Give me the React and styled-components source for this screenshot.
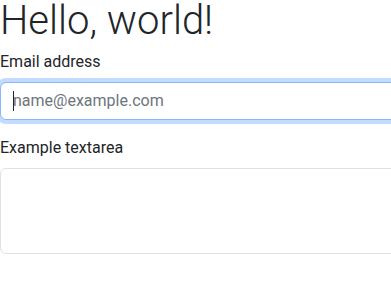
import React from "react";
import styled, { createGlobalStyle } from "styled-components";

const GlobalStyle = createGlobalStyle`
  html, body {
    margin: 0;
    overflow: hidden;
    background: #fff;
  }
  body {
    font-family: Roboto, "Noto Sans", sans-serif;
    font-size: 16px;
    line-height: 1.5;
    color: #212529;
  }
  * {
    box-sizing: border-box;
  }
`;

const Page = styled.main`
  width: 440px;
`;

const Title = styled.h1`
  margin: 0 0 8px;
  font-size: 40px;
  font-weight: 300;
  line-height: 42px;
`;

const Group = styled.div`
  margin-bottom: 16px;
`;

const Label = styled.label`
  display: block;
  margin-bottom: 8px;
`;

const Field = styled.div`
  position: relative;
`;

const Input = styled.input`
  display: block;
  width: 100%;
  padding: 6px 12px;
  font: inherit;
  line-height: 24px;
  color: #212529;
  background: #fff;
  border: 1px solid ${({ $focused }) => ($focused ? "#86b7fe" : "#dee2e6")};
  border-radius: 6px;
  outline: none;
  box-shadow: ${({ $focused }) =>
    $focused ? "0 0 0 4px rgba(13, 110, 253, 0.25)" : "none"};

  &::placeholder {
    color: #6c757d;
  }
`;

const TextArea = styled.textarea`
  display: block;
  width: 100%;
  height: 86px;
  padding: 6px 12px;
  font: inherit;
  line-height: 24px;
  border: 1px solid #dee2e6;
  border-radius: 6px;
  resize: none;
  outline: none;
`;

const Caret = styled.span`
  position: absolute;
  left: 13px;
  top: 9px;
  width: 1px;
  height: 20px;
  background: #212529;
`;

export default function App() {
  return (
    <>
      <GlobalStyle />
      <Page>
        <Title>Hello, world!</Title>
        <Group>
          <Label htmlFor="email">Email address</Label>
          <Field>
            <Input id="email" type="email" placeholder="name@example.com" $focused />
            <Caret />
          </Field>
        </Group>
        <Group>
          <Label htmlFor="notes">Example textarea</Label>
          <TextArea id="notes" rows={3} />
        </Group>
      </Page>
    </>
  );
}
